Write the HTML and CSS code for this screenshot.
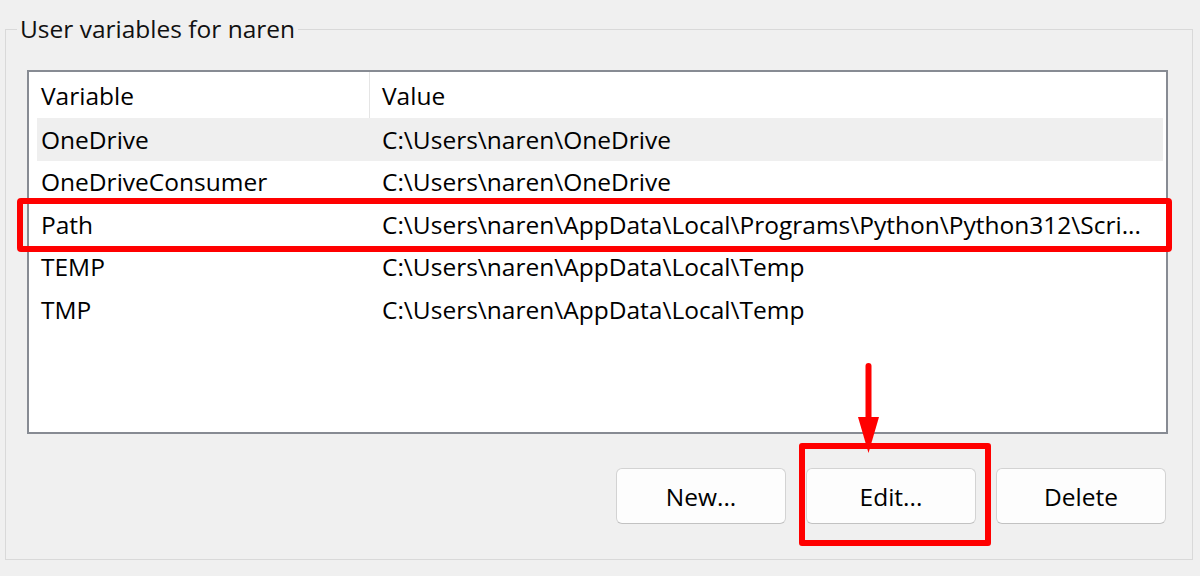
FILE: index.html
```html
<!DOCTYPE html>
<html lang="en">
<head>
  <meta charset="UTF-8" />
  <title>Environment Variables</title>
  <link rel="stylesheet" href="styles.css">
</head>
<body>

  <fieldset class="group">
    <legend>User variables for naren</legend>

    <div class="list">
      <div class="list-head">
        <div class="cell var">Variable</div>
        <div class="cell val">Value</div>
      </div>
      <div class="row hover">
        <div class="cell var">OneDrive</div>
        <div class="cell val">C:\Users\naren\OneDrive</div>
      </div>
      <div class="row">
        <div class="cell var">OneDriveConsumer</div>
        <div class="cell val">C:\Users\naren\OneDrive</div>
      </div>
      <div class="row marked">
        <div class="cell var">Path</div>
        <div class="cell val">C:\Users\naren\AppData\Local\Programs\Python\Python312\Scri...</div>
        <span class="mark-row"></span>
      </div>
      <div class="row">
        <div class="cell var">TEMP</div>
        <div class="cell val">C:\Users\naren\AppData\Local\Temp</div>
      </div>
      <div class="row">
        <div class="cell var">TMP</div>
        <div class="cell val">C:\Users\naren\AppData\Local\Temp</div>
      </div>
    </div>

    <div class="actions">
      <button class="btn">New...</button>
      <div class="edit-wrap">
        <button class="btn">Edit...</button>
        <span class="mark-btn"></span>
        <svg class="arrow" width="21" height="90" viewBox="0 0 21 90">
          <rect x="7.5" y="0" width="6" height="60" rx="3" fill="#ff0000"/>
          <polygon points="0,54 21,54 10.5,90" fill="#ff0000"/>
        </svg>
      </div>
      <button class="btn">Delete</button>
    </div>
  </fieldset>

</body>
</html>
```

FILE: styles.css
```css
body {
  margin: 0;
  padding: 14px 7px 0 5px;
  background: #f0f0f0;
  font-family: 'Open Sans', 'Noto Sans', sans-serif;
  font-size: 24.5px;
  color: #000;
}

.group {
  margin: 0;
  border: 1px solid #d9d9d9;
  padding: 0 24px 35px 21px;
}

.group legend {
  margin-left: -10px;
  padding: 0 3px;
  line-height: 30px;
  color: #111;
}

.list {
  margin-top: 26px;
  height: 364px;
  box-sizing: border-box;
  border: 2px solid #878b93;
  background: #fff;
  padding: 0 3px 0 8px;
}

.list-head,
.row {
  display: grid;
  grid-template-columns: 333px 1fr;
  align-items: center;
}

.list-head {
  height: 46px;
}

.list-head .var {
  height: 100%;
  display: flex;
  align-items: center;
  border-right: 1px solid #e5e5e5;
}

.row {
  height: 42.5px;
  position: relative;
}

.row.hover {
  background: #efefef;
}

.cell {
  white-space: nowrap;
  overflow: hidden;
}

.cell.var {
  padding-left: 4px;
}

.cell.val {
  padding-left: 12px;
}

.mark-row {
  position: absolute;
  left: -20px;
  right: -9px;
  top: -5px;
  bottom: -6px;
  border: 6px solid #ff0000;
  border-radius: 4px;
}

.actions {
  display: flex;
  justify-content: flex-end;
  gap: 20px;
  margin-top: 34px;
  margin-right: 2px;
}

.btn {
  width: 170px;
  height: 56px;
  background: #fdfdfd;
  border: 1px solid #d3d3d3;
  border-bottom-color: #c2c2c2;
  border-radius: 6px;
  font-family: inherit;
  font-size: 24.5px;
  color: #000;
  padding: 0;
}

.edit-wrap {
  position: relative;
  display: flex;
}

.mark-btn {
  position: absolute;
  left: -7px;
  right: -15px;
  top: -25px;
  bottom: -22px;
  border: 6px solid #ff0000;
  border-radius: 3px;
}

.arrow {
  position: absolute;
  left: 52px;
  top: -105px;
}
```
